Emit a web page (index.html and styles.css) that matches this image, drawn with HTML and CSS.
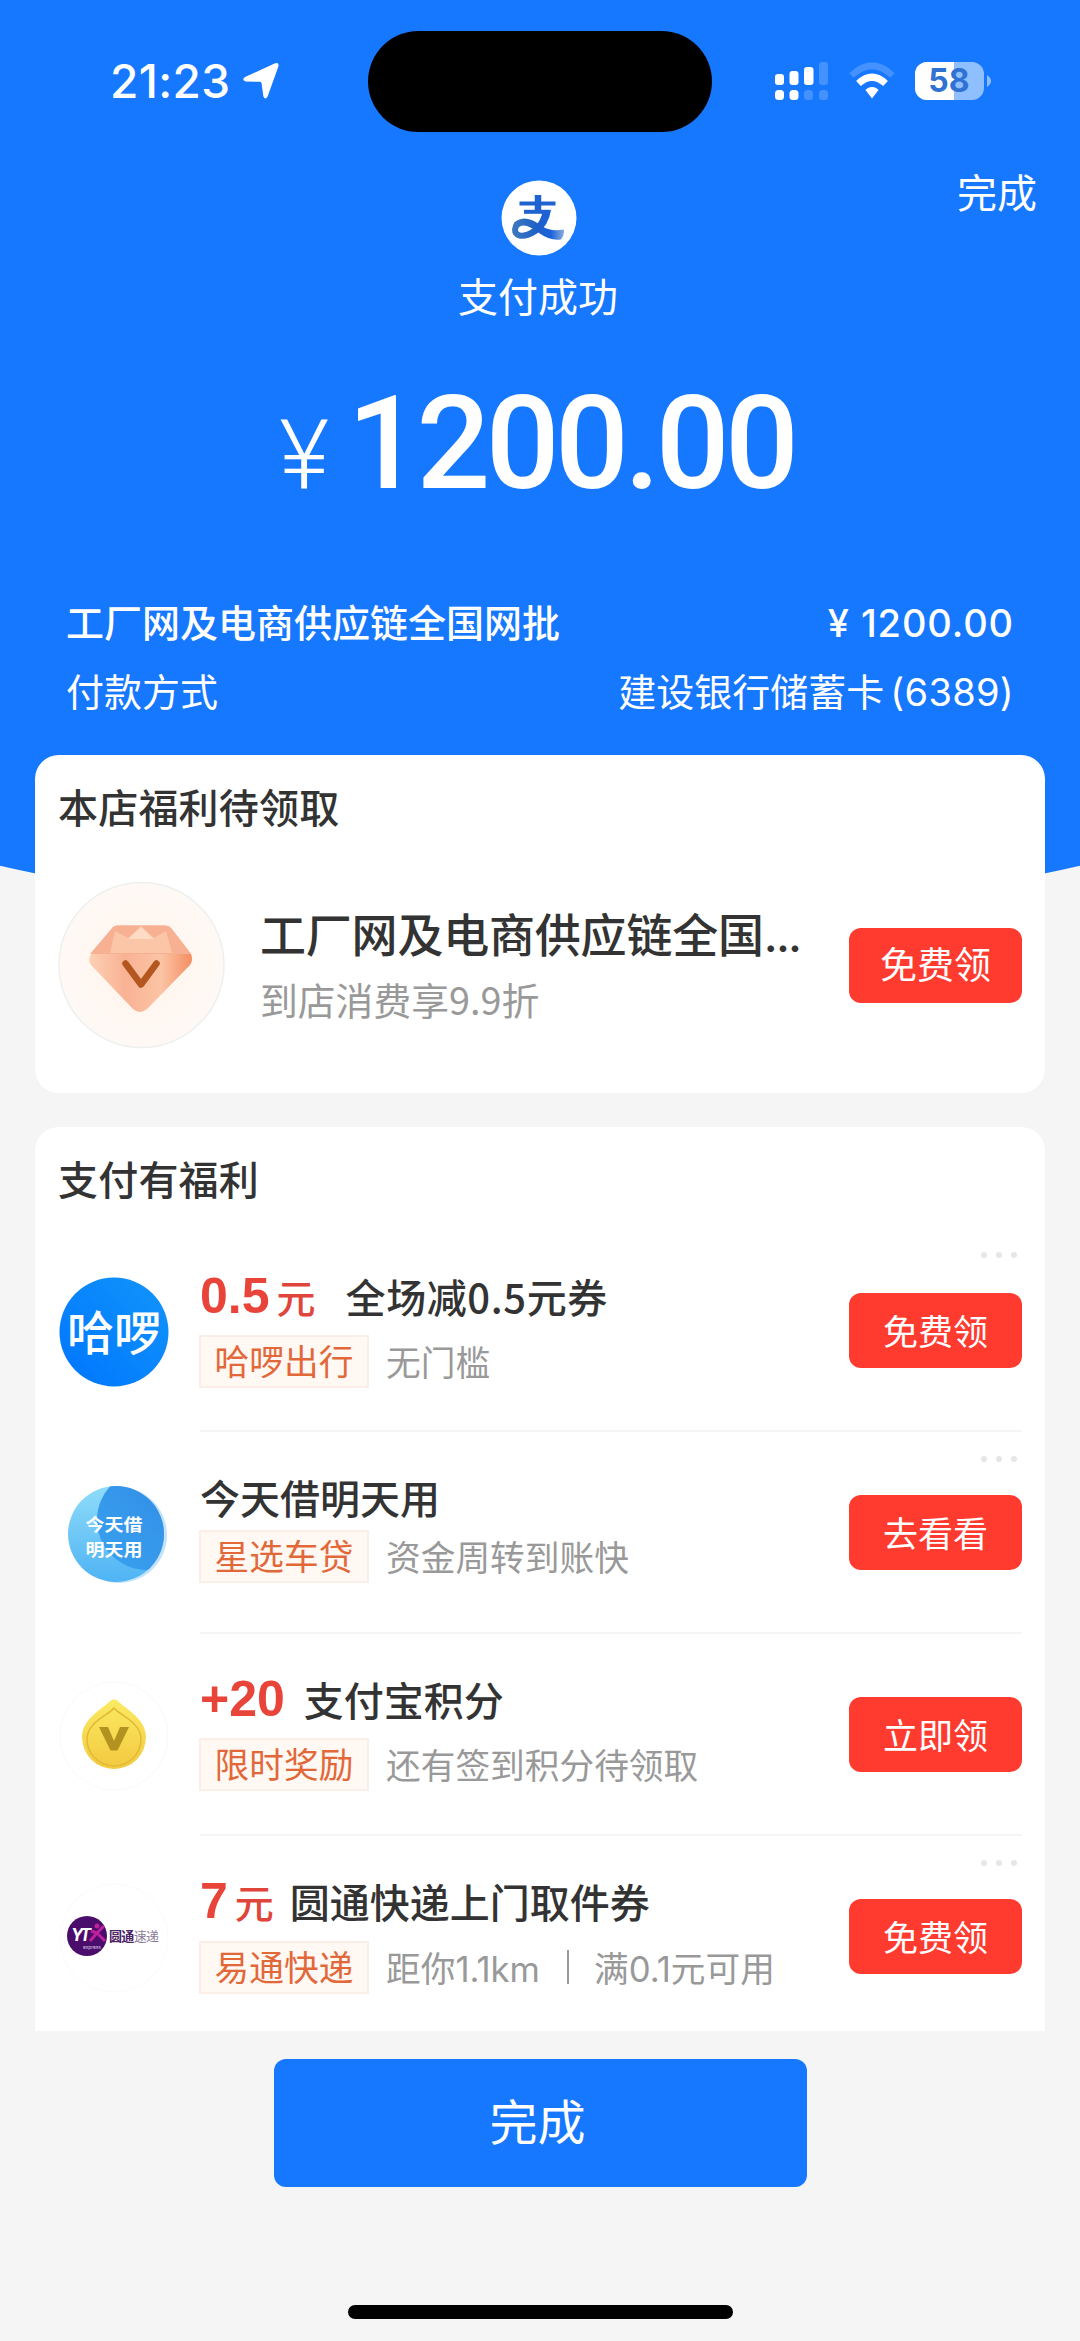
FILE: index.html
```html
<!DOCTYPE html>
<html lang="zh-CN">
<head>
<meta charset="utf-8">
<title>支付成功</title>
<link rel="stylesheet" href="styles.css">
</head>
<body>
<div class="page">
  <div class="status-bar">
    <div class="clock">
      <span class="time">21:23</span>
      <svg class="location" width="38" height="38" viewBox="0 0 38 38"><path d="M32.500 1.600Q37.600-.6 36.200 5L25.600 34.500Q23.200 38.500 21.400 34.500L19.600 21.500Q19.400 20 18 19.800L3.600 19.400Q-.8 18 3 15Z" fill="#fff"/></svg>
    </div>
    <div class="island"></div>
    <div class="indicators">
      <svg width="54" height="40" viewBox="0 0 54 40" fill="#fff">
        <rect x="0" y="13" width="9" height="11" rx="3"/><rect x="14.500" y="10" width="9" height="14" rx="3"/><rect x="29" y="6" width="9.500" height="18" rx="3"/><rect x="44" y="1" width="9" height="23" rx="3" opacity=".2"/>
        <rect x="0" y="29" width="9" height="10" rx="3.500"/><rect x="14.500" y="29" width="9" height="10" rx="3.500"/><rect x="29" y="29" width="9" height="10" rx="3.500" opacity=".2"/><rect x="44" y="29" width="9" height="10" rx="3.500" opacity=".2"/>
      </svg>
      <svg class="wifi" width="46" height="40" viewBox="0 0 46 40" fill="none" stroke="#fff">
        <path d="M2.500 14.500Q23-5 43.500 14.500" stroke-width="6.500" opacity=".2"/>
        <path d="M9.500 22.500Q23 10 36.500 22.500" stroke-width="7"/>
        <path d="M23 26Q27 26 29.500 29L23 37.500L16.500 29Q19 26 23 26Z" fill="#fff" stroke="none"/>
      </svg>
      <svg class="battery" width="76" height="40" viewBox="0 0 76 40">
        <defs><clipPath id="cell"><rect x="0" y="1" width="69" height="38" rx="12"/></clipPath></defs>
        <g clip-path="url(#cell)"><rect width="69" height="40" fill="#8fbfff"/><rect width="39" height="40" fill="#fff"/></g>
        <path d="M72 14Q76 17 76 20T72 26Z" fill="#8fbfff"/>
        <text x="34" y="31" text-anchor="middle" class="battery-level">58</text>
      </svg>
    </div>
  </div>

  <header class="result">
    <span class="nav-done">完成</span>
    <svg class="pay-logo" width="76" height="76" viewBox="0 0 76 76">
      <defs><linearGradient id="ribbon" x1="0" y1="0" x2="1" y2="0"><stop offset="0" stop-color="#3d78bd"/><stop offset=".5" stop-color="#1e60c9"/><stop offset=".75" stop-color="#1b62dd"/><stop offset="1" stop-color="#8aaedb"/></linearGradient></defs>
      <circle cx="38" cy="38" r="37.500" fill="#fff"/>
      <g fill="none" stroke="#1e63cf" stroke-width="5">
        <path d="M18.500 23.500H54.500" stroke-width="4"/>
        <path d="M37 15V33" stroke-width="6.500"/>
        <path d="M23 31.800H49" stroke-width="4"/>
      </g>
      <path d="M50 30Q47.500 46 36 53.500Q26 60 18 58.500Q11 56.500 11 49.500Q12 39 23 38.500Q31 38.500 40 45.500Q49 52 63 49.500Q63.500 55 60 59.500Q49 61 38 53Q28 45 22 45.500Q17 46 17 50Q17.500 53.500 22.500 52.500Q29 51.500 35 45.500Q40 40 42 30Z" fill="url(#ribbon)"/>
    </svg>
    <p class="result-text">支付成功</p>
    <p class="amount"><span class="currency">¥</span><span class="figure">1200.00</span></p>
    <div class="detail detail-main"><span>工厂网及电商供应链全国网批</span><span class="detail-price">¥ 1200.00</span></div>
    <div class="detail"><span>付款方式</span><span>建设银行储蓄卡<span class="card-no">(6389)</span></span></div>
  </header>

  <main class="cards">
    <section class="card store-card">
      <h2>本店福利待领取</h2>
      <div class="store">
        <svg class="gem" width="168" height="168" viewBox="0 0 168 168">
          <defs>
            <radialGradient id="disc"><stop offset="0" stop-color="#fff3ea"/><stop offset="1" stop-color="#fff9f5"/></radialGradient>
            <linearGradient id="gemBody" x1="0" y1="0" x2="1" y2="0"><stop offset="0" stop-color="#fdd0b4"/><stop offset=".35" stop-color="#f9b294"/><stop offset=".7" stop-color="#fbc4a4"/><stop offset="1" stop-color="#f48e62"/></linearGradient>
          </defs>
          <circle cx="83.500" cy="84" r="82.500" fill="url(#disc)" stroke="#eef0f0" stroke-width="1.500"/>
          <g transform="translate(-1 0)">
          <path d="M56 46Q58 44.500 60 44.500H108Q112 44.500 114 47L134 73Q136.500 79 133 84L90 128Q83 134 76 128L34 84Q31 80 33 75Z" fill="url(#gemBody)"/>
          <path d="M56 46Q58 44.500 60 44.500H108Q112 44.500 114 47L134 73H33Z" fill="#f7b091"/>
          <path d="M53 72L58 50L71 57L84 45L97 57L109 50L115 72Z" fill="#fbc6a8"/>
          <path d="M84 46L97 58H71Z" fill="#fedbc4"/>
          <path d="M68.500 82.500L84 103.500L99.500 82.500" fill="none" stroke="#b4561f" stroke-width="6.500" stroke-linecap="round" stroke-linejoin="round"/>
          </g>
        </svg>
        <div class="store-info">
          <h3>工厂网及电商供应链全国<span class="dots3">...</span></h3>
          <p>到店消费享9.9折</p>
        </div>
        <button class="claim claim-lg">免费领</button>
      </div>
    </section>

    <section class="card offers">
      <h2>支付有福利</h2>
      <article class="offer offer-ride">
        <svg class="offer-logo" width="110" height="110" viewBox="0 0 110 110">
          <defs><linearGradient id="hello" x1="0" y1="1" x2="1" y2="0"><stop offset="0" stop-color="#0075ff"/><stop offset="1" stop-color="#1195fa"/></linearGradient></defs>
          <circle cx="55" cy="55" r="54.500" fill="url(#hello)"/>
          <text x="55" y="73" text-anchor="middle" class="hello-text">哈啰</text>
        </svg>
        <div class="offer-body">
          <h3 class="offer-title"><b>0.5</b><i>元</i><span class="wide">全场减0.5元券</span></h3>
          <p class="offer-meta"><span class="tag">哈啰出行</span>无门槛</p>
        </div>
        <div class="offer-action"><svg class="more" width="38" height="8" viewBox="0 0 38 8"><circle cx="4" cy="4" r="3"/><circle cx="19" cy="4" r="3"/><circle cx="34" cy="4" r="3"/></svg><button class="claim">免费领</button></div>
      </article>
      <article class="offer offer-loan">
        <svg class="offer-logo" width="110" height="110" viewBox="0 0 110 110">
          <defs>
            <linearGradient id="loanA" x1="0" y1="0" x2="0" y2="1"><stop offset="0" stop-color="#8fdcf9"/><stop offset="1" stop-color="#4fb3f4"/></linearGradient>
            <linearGradient id="loanB" x1="0" y1="1" x2="1" y2="0"><stop offset="0" stop-color="#3aa2ef"/><stop offset="1" stop-color="#2f88e4"/></linearGradient>
            <clipPath id="loanClip"><circle cx="57" cy="55" r="48"/></clipPath>
          </defs>
          <circle cx="60" cy="56" r="48" fill="#c5e3f8"/>
          <circle cx="57" cy="55" r="48" fill="url(#loanA)"/>
          <circle cx="88" cy="41" r="50" fill="url(#loanB)" clip-path="url(#loanClip)"/>
          <text x="26.500" y="52" class="loan-text" textLength="57" lengthAdjust="spacingAndGlyphs">今天借</text>
          <text x="26.500" y="76.500" class="loan-text" textLength="57" lengthAdjust="spacingAndGlyphs">明天用</text>
        </svg>
        <div class="offer-body">
          <h3 class="offer-title"><span>今天借明天用</span></h3>
          <p class="offer-meta"><span class="tag">星选车贷</span>资金周转到账快</p>
        </div>
        <div class="offer-action"><svg class="more" width="38" height="8" viewBox="0 0 38 8"><circle cx="4" cy="4" r="3"/><circle cx="19" cy="4" r="3"/><circle cx="34" cy="4" r="3"/></svg><button class="claim">去看看</button></div>
      </article>
      <article class="offer">
        <svg class="offer-logo" width="110" height="110" viewBox="0 0 110 110">
          <defs><linearGradient id="coin" x1="0" y1="0" x2="0" y2="1"><stop offset="0" stop-color="#fbea63"/><stop offset="1" stop-color="#f3c93f"/></linearGradient></defs>
          <circle cx="55" cy="55" r="54" fill="#fff" stroke="#f9f9f9"/>
          <path d="M50 21Q55 15.500 60 21C66 27 87 38 87 56A32 32 0 0 1 23 56C23 38 44 27 50 21Z" fill="url(#coin)"/>
          <path d="M55 27C60 34 82 41 82 58A27 27 0 0 1 28 58C28 41 50 34 55 27Z" fill="none" stroke="#e0ba35" stroke-width="1.500"/>
          <path d="M40 46H49L55 60L61 46H70L58.500 69.500H51.500Z" fill="#b39222"/>
        </svg>
        <div class="offer-body">
          <h3 class="offer-title"><b>+20</b><span class="after-plain">支付宝积分</span></h3>
          <p class="offer-meta"><span class="tag">限时奖励</span>还有签到积分待领取</p>
        </div>
        <div class="offer-action"><button class="claim">立即领</button></div>
      </article>
      <article class="offer offer-express">
        <svg class="offer-logo" width="110" height="110" viewBox="0 0 110 110">
          <circle cx="55" cy="55" r="54" fill="#fff" stroke="#fbfbfb"/>
          <circle cx="28" cy="53" r="20" fill="#4b0d6b"/>
          <text x="12" y="58" class="yt-text" textLength="20">YT</text>
          <path d="M31 58L38 50L32 48M38 50L46 58M38 50L45 43" fill="none" stroke="#c0209c" stroke-width="3"/><circle cx="38" cy="43" r="2.500" fill="#c0209c"/>
          <text x="24" y="65.500" class="express-text" textLength="18">express</text>
          <text x="50" y="58" class="brand-text" textLength="50"><tspan fill="#4a2266">圆通</tspan><tspan fill="#8c7c98" font-weight="400">速递</tspan></text>
        </svg>
        <div class="offer-body">
          <h3 class="offer-title"><b>7</b><i>元</i><span class="near">圆通快递上门取件券</span></h3>
          <p class="offer-meta"><span class="tag">易通快递</span>距你1.1km<span class="bar"></span>满0.1元可用</p>
        </div>
        <div class="offer-action"><svg class="more" width="38" height="8" viewBox="0 0 38 8"><circle cx="4" cy="4" r="3"/><circle cx="19" cy="4" r="3"/><circle cx="34" cy="4" r="3"/></svg><button class="claim">免费领</button></div>
      </article>
    </section>
  </main>

  <footer class="footer">
    <button class="done">完成</button>
    <div class="home-indicator"></div>
  </footer>
</div>
</body>
</html>
```
FILE: styles.css
```css
* { box-sizing: border-box; }
body, h2, h3, p { margin: 0; }
body { background: #f5f5f5; }
button { border: 0; padding: 0; font: inherit; color: #fff; }
svg { display: block; flex: none; }

.page {
  position: relative;
  width: 1080px;
  height: 2341px;
  overflow: hidden;
  display: flex;
  flex-direction: column;
  background: #f5f5f5;
  color: #333;
  font-family: "Inter", "Noto Sans CJK SC", sans-serif;
  font-size: 38px;
  z-index: 0;
}
.page::before {
  content: "";
  position: absolute;
  z-index: -1;
  top: 0;
  left: -540px;
  width: 2160px;
  height: 923px;
  background: #1677ff;
  border-radius: 0 0 50% 50% / 0 0 428px 428px;
}

/* status bar */
.status-bar {
  display: grid;
  grid-template-columns: 368px 344px 368px;
  align-items: center;
  height: 101px;
  margin-top: 31px;
  color: #fff;
}
.clock { display: flex; align-items: center; gap: 11px; padding-left: 110px; padding-bottom: 2px; }
.time { width: 121px; font-size: 46px; line-height: 46px; font-weight: 550; letter-spacing: .4px; white-space: nowrap; }
.island { height: 101px; border-radius: 51px; background: #000; }
.indicators { display: flex; align-items: center; padding-left: 63px; padding-bottom: 2px; }
.wifi { margin-left: 20px; }
.battery { margin-left: 20px; }
.battery-level { font: 700 32px "Inter", sans-serif; fill: #2f72d2; }

/* payment result */
.result {
  display: grid;
  grid-template-rows: 48px 76px 66px 266px 69px 69px;
  height: 623px;
  padding: 0 66px;
  color: #fff;
}
.nav-done { justify-self: end; margin: 34px -23px 0 0; height: 56px; line-height: 56px; font-size: 40px; }
.pay-logo { justify-self: center; margin-right: 2px; }
.result-text { text-align: center; font-size: 40px; line-height: 56px; margin: 14px 4px 0 0; }
.amount { display: flex; justify-content: center; align-items: baseline; line-height: 134px; margin: 55px 6px 0 0; font-family: "Roboto", sans-serif; }
.currency { font-size: 96px; font-weight: 350; margin-right: 18px; }
.figure { font-size: 130px; font-weight: 500; letter-spacing: -4.600px; }
.detail { display: flex; justify-content: space-between; align-items: center; line-height: 56px; }
.detail-main { font-weight: 500; }
.detail-price { letter-spacing: .9px; }
.card-no { margin-left: 6px; letter-spacing: .3px; }

/* cards */
.cards { display: flex; flex-direction: column; gap: 34px; padding: 0 35px; }
.card { background: #fff; border-radius: 24px; padding: 0 23px; }
.card h2 { height: 103px; padding-top: 2px; font-size: 40px; line-height: 103px; font-weight: 500; letter-spacing: .2px; }
.store-card { height: 338px; }
.store { display: flex; align-items: flex-start; margin-top: 23px; }
.store-info { width: 588px; padding-left: 34px; }
.store h3 { font-size: 46px; line-height: 60px; font-weight: 500; margin-top: 24px; letter-spacing: -.2px; white-space: nowrap; }
.dots3 { letter-spacing: -1.800px; }
.store p { color: #999; line-height: 54px; margin-top: 7px; font-family: "Noto Sans CJK SC", sans-serif; font-size: 37.800px; }
.claim { width: 173px; height: 75px; flex: none; border-radius: 12px; background: #ff3a2f; font-size: 35px; line-height: 78px; }
.claim-lg { margin: 47px 0 0 35px; font-size: 37px; line-height: 75px; }

.offers { height: 904px; border-radius: 24px 24px 0 0; }
.offers h2 { margin-bottom: -2px; }
.offer { display: grid; grid-template-columns: 142px 649px 173px; height: 202px; }
.offer-logo { margin: 49px 0 0 1px; }
.offer + .offer .offer-body, .offer + .offer .offer-action { border-top: 2px solid #f5f5f5; }
.offer-title { display: flex; align-items: baseline; height: 60px; line-height: 60px; margin-top: 35px; font-family: "Noto Sans CJK SC", sans-serif; font-size: 40px; font-weight: 500; white-space: nowrap; }
.offer-title b { font: 700 50px/60px "Liberation Sans", sans-serif; color: #e8443a; }
.offer-title i { font-style: normal; font-size: 39px; color: #e0453c; margin-left: 7px; }
.offer-title .wide { margin-left: 30px; letter-spacing: .6px; }
.offer-title .near { margin-left: 16px; }
.offer-title .after-plain { margin-left: 19px; }
.offer-meta { display: flex; align-items: center; height: 54px; margin-top: 8px; font-size: 34.700px; color: #999; white-space: nowrap; }
.tag { width: 170px; height: 53px; margin: 0 17px 0 -1px; border: 2px solid #fbeee6; background: #fff8f3; color: #e2683a; text-align: center; line-height: 51px; }
.offer-ride .offer-title { margin-top: 38px; }
.offer-loan .offer-meta { margin-top: 2px; }
.offer-express .offer-meta { margin-top: 9px; }
.bar { width: 2px; height: 34px; margin: 0 25px 0 27px; background: #999; }
.offer-action { display: flex; flex-direction: column; align-items: flex-end; }
.offer-action .claim { margin-top: auto; margin-bottom: 62px; }
.more { margin: 23px 4px 0 0; fill: #e6e6e6; }

.hello-text { font: 500 47px "Noto Sans CJK SC", sans-serif; fill: #fff; }
.loan-text { font: 700 16.500px "Noto Sans CJK SC", sans-serif; fill: #fff; }
.yt-text { font: italic 700 17px "Inter", sans-serif; fill: #fff; }
.express-text { font: 400 5px "Inter", sans-serif; fill: #d9c4e2; }
.brand-text { font: 700 13px "Noto Sans CJK SC", sans-serif; }

/* footer */
.footer { display: flex; flex-direction: column; align-items: center; padding-top: 28px; }
.done { width: 533px; height: 128px; padding-right: 5px; border-radius: 12px; background: #1677ff; font-size: 48px; line-height: 124px; }
.home-indicator { width: 385px; height: 14px; margin-top: 118px; border-radius: 7px; background: #000; }
```
